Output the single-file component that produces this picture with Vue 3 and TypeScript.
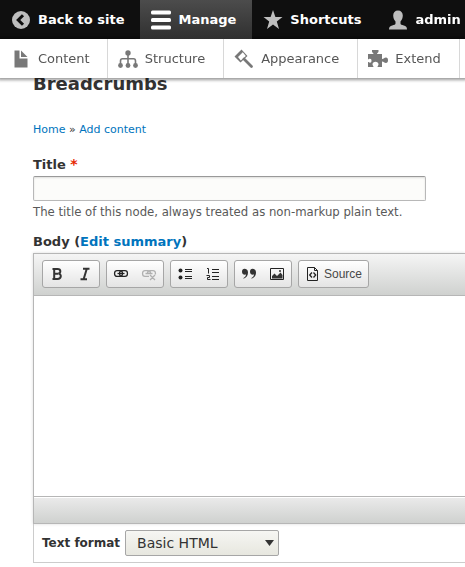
<script setup lang="ts">
import { ref } from 'vue'

const title = ref('')
const body = ref('')
const format = ref('Basic HTML')
</script>

<template>
  <header class="admin">
    <nav class="bar" aria-label="Administration">
      <a href="#" class="tab back">
        <svg width="18" height="18" viewBox="0 0 18 18"><circle cx="9" cy="9" r="9" fill="#bebebe" /><path d="M11 4.200 6.200 9l4.800 4.800" fill="none" stroke="#0f0f0f" stroke-width="3" /></svg>
        Back to site
      </a>
      <a href="#" class="tab active">
        <svg width="20" height="20" viewBox="0 0 20 20" fill="#fff"><rect y="0.500" width="20" height="4" rx="1.500" /><rect y="8" width="20" height="4" rx="1.500" /><rect y="15.500" width="20" height="4" rx="1.500" /></svg>
        Manage
      </a>
      <a href="#" class="tab">
        <svg width="20" height="20" viewBox="0 0 20 20" fill="#bebebe"><path d="M10 0l2.400 7H19.500l-5.700 4.600L16 19l-6-4.400L4 19l2.200-7.400L.5 7h7.100z" /></svg>
        Shortcuts
      </a>
      <a href="#" class="tab">
        <svg width="20" height="20" viewBox="0 0 20 20" fill="#bebebe"><path d="M10 .5c3 0 4.800 2 4.800 5 0 2.600-1 4.600-2.300 6v2c0 1 1.300 1.500 3.300 2 2 .5 3.200 1.200 3.200 4H1c0-2.800 1.200-3.500 3.200-4s3.300-1 3.300-2v-2c-1.300-1.400-2.300-3.400-2.300-6 0-3 1.800-5 4.800-5z" /></svg>
        admin
      </a>
    </nav>
    <nav class="tray" aria-label="Manage">
      <a href="#" class="item">
        <svg width="20" height="20" viewBox="0 0 20 20" fill="#787878"><path d="M3.500 1.500h5v8h8v9h-13z" /><path d="M10 1.500 16.500 8H10z" /></svg>
        Content
      </a>
      <a href="#" class="item">
        <svg width="20" height="20" viewBox="0 0 20 20" fill="#787878"><path d="M2.500 16v-4q0-2.200 2-2.200h11q2 0 2 2.200v4M10 4v12" fill="none" stroke="#787878" stroke-width="1.600" /><circle cx="10" cy="4" r="2.700" /><circle cx="2.500" cy="16.500" r="2.400" /><circle cx="10" cy="16.500" r="2.400" /><circle cx="17.500" cy="16.500" r="2.400" /></svg>
        Structure
      </a>
      <a href="#" class="item">
        <svg width="20" height="20" viewBox="0 0 20 20" fill="#787878"><path fill-rule="evenodd" d="M7.500.500 13.500 7 6.500 13.500 0.500 7.500zM8.800 3.200 4 8l2.800 3.400L11.800 7z" /><path d="M10 10l7.500 7.500" fill="none" stroke="#787878" stroke-width="2.800" stroke-linecap="round" /></svg>
        Appearance
      </a>
      <a href="#" class="item">
        <svg width="20" height="20" viewBox="0 0 20 20" fill="#787878"><path d="M0 5h5.500c0-1-1.500-1.200-1.500-2.500V1h6.500v1.500C10.500 3.800 9 4 9 5h5v5c2 0 2-1.500 4-1.500 1.300 0 2 1 2 2.800s-.7 2.700-2 2.700c-2 0-2-1.500-4-1.500V18H9.500c0-1 1-1.500 1-2.700 0-1.600-1.300-2.500-3-2.500s-3 .9-3 2.500c0 1.200 1 1.700 1 2.700H0v-5c.7 0 1 .7 2 .7s1.500-1 1.500-2S3 9.800 2 9.800s-1.300.7-2 .7z" /></svg>
        Extend
      </a>
    </nav>
  </header>

  <main class="page">
    <h2 class="heading">Breadcrumbs</h2>
    <nav class="crumbs" aria-label="Breadcrumb"><a href="#">Home</a> » <a href="#">Add content</a></nav>

    <form @submit.prevent>
      <label class="label" for="title">Title <span class="required">*</span></label>
      <input id="title" v-model="title" class="text" type="text" aria-describedby="title-help" required />
      <p id="title-help" class="help">The title of this node, always treated as non-markup plain text.</p>

      <div class="label body-label"><label for="body">Body</label> (<a href="#">Edit summary</a>)</div>
      <div class="editor">
        <div class="tools" role="toolbar" aria-label="Editor toolbar">
          <div class="group">
            <button type="button" aria-label="Bold"><svg width="16" height="16" viewBox="0 0 16 16"><path d="M3.500 3H8.500c3.800 0 3.500 4 .8 4.600C13 8 12.500 13 8.500 13H3.500M5.200 3v10M5 7.700h4" fill="none" stroke="#333" stroke-width="2" /></svg></button>
            <button type="button" aria-label="Italic"><svg width="16" height="16" viewBox="0 0 16 16"><path d="M6 2.800h6.500M3.500 13.200H10M9.700 3 6.700 13" fill="none" stroke="#333" stroke-width="2" /></svg></button>
          </div>
          <div class="group">
            <button type="button" aria-label="Link"><svg width="16" height="16" viewBox="0 0 16 16" fill="none" stroke="#222" stroke-width="1.300"><rect x="1.600" y="4.600" width="7.800" height="5.800" rx="2.400" /><rect x="6.600" y="4.600" width="7.800" height="5.800" rx="2.400" /><path d="M4.500 7.500h7" /></svg></button>
            <button type="button" aria-label="Unlink" disabled><svg width="16" height="16" viewBox="0 0 16 16" fill="none" stroke="#b0b0b0" stroke-width="1.300"><path d="M8 10.400H4A2.400 2.400 0 0 1 1.600 8V7A2.400 2.400 0 0 1 4 4.600h3a2.400 2.400 0 0 1 2.400 2.400M6.600 8V7A2.400 2.400 0 0 1 9 4.600h3a2.400 2.400 0 0 1 2.400 2.400v1.500M4.500 7.500h7M9 9l5 5M14 9l-5 5" /></svg></button>
          </div>
          <div class="group">
            <button type="button" aria-label="Bulleted list"><svg width="16" height="16" viewBox="0 0 16 16" fill="#222"><circle cx="3.500" cy="4.500" r="2" /><circle cx="3.500" cy="11.500" r="2" /><path d="M8 3h7v1H8zM8 5h7v1H8zM8 10h7v1H8zM8 12h7v1H8z" /></svg></button>
            <button type="button" aria-label="Numbered list"><svg width="16" height="16" viewBox="0 0 16 16" fill="#222"><path d="M7 3h7v1H7zM7 6h7v1H7zM7 10h7v1H7zM7 13h7v1H7z" /><path d="M2 2.500h1.500v5M1.500 9.500h3v2h-2v2h3" fill="none" stroke="#222" /></svg></button>
          </div>
          <div class="group">
            <button type="button" aria-label="Block quote"><svg width="16" height="16" viewBox="0 0 16 16" fill="#333"><path d="M3.500 2.800c2 0 3.500 1.200 3.500 3.800 0 3.200-1.800 5.400-4.500 6.200v-.8c1.500-.8 2.500-2 2.500-3.400C2.700 9.200 1 8 1 5.800c0-1.800 1-3 2.500-3z" /><path d="M11.500 2.800c2 0 3.500 1.200 3.500 3.800 0 3.200-1.800 5.400-4.500 6.200v-.8c1.500-.8 2.500-2 2.500-3.400C10.700 9.200 9 8 9 5.800c0-1.800 1-3 2.500-3z" /></svg></button>
            <button type="button" aria-label="Image"><svg width="16" height="16" viewBox="0 0 16 16"><path d="M1.500 2.500h13v11h-13z" fill="none" stroke="#222" /><path d="M3 12.500V10l2.500-2.500L8 10l3.500-3.500L13.500 9v3.500z" fill="#333" /><circle cx="11" cy="5" r="1" fill="#333" /></svg></button>
          </div>
          <div class="group">
            <button type="button"><svg width="16" height="16" viewBox="0 0 16 16" fill="none" stroke="#222"><path d="M2.500 1.500h7l3 3v10h-10z" /><path d="M9.500 1.500v3h3" /><path d="M7 6.500 4.700 9 7 11.500M8.500 6.500 10.700 9 8.500 11.500" stroke-width="1.300" /></svg>Source</button>
          </div>
        </div>
        <textarea id="body" v-model="body" class="area"></textarea>
        <div class="foot"></div>
      </div>
      <div class="format">
        <label for="format">Text format</label>
        <span class="picker">
          <select id="format" v-model="format">
            <option>Basic HTML</option>
            <option>Restricted HTML</option>
            <option>Full HTML</option>
          </select>
          <svg width="9" height="6" viewBox="0 0 9 6"><path d="M0 0h9L4.500 6z" fill="#333" /></svg>
        </span>
      </div>
    </form>
  </main>
</template>

<style>
body {
  background: #fff;
}
</style>

<style scoped>
* {
  box-sizing: border-box;
}
svg {
  display: block;
  flex: none;
}
a {
  color: #0074bd;
  text-decoration: none;
}
.admin {
  position: fixed;
  z-index: 2;
  top: 0;
  left: 0;
  right: 0;
  overflow: hidden;
  padding-bottom: 5px;
  font: 13px/39px "DejaVu Sans", sans-serif;
  white-space: nowrap;
}
.bar {
  display: flex;
  height: 39px;
  background: #0f0f0f;
}
.tab {
  display: flex;
  align-items: center;
  gap: 7px;
  padding: 0 16px 0 11px;
  color: #fff;
  font-weight: bold;
}
.back {
  gap: 8px;
  padding-left: 12px;
}
.active {
  background: linear-gradient(#4c4c4c, #303030);
}
.tray {
  display: flex;
  height: 39px;
  background: #fff;
  box-shadow: 0 0 3px 2px rgba(0, 0, 0, 0.4);
}
.item {
  display: flex;
  align-items: center;
  gap: 7px;
  padding: 0 17px 0 11px;
  border-right: 1px solid #d8d8d8;
  color: #565656;
}
.item + .item {
  padding: 0 18px 0 10px;
}
.page {
  padding: 72px 0 4px 33px;
  overflow: hidden;
  color: #333;
  font: 13px/20px "DejaVu Sans", sans-serif;
}
.heading {
  margin: 0;
  font: bold 18px/24px "DejaVu Sans", sans-serif;
}
.crumbs {
  margin: 25px 0 16px;
  font-size: 11px;
  line-height: 18px;
}
.label {
  display: block;
  font-weight: bold;
}
.required {
  color: #e62600;
  font-size: 14px;
  line-height: 16px;
}
.text {
  display: block;
  width: calc(100% - 39px);
  height: 25px;
  margin-top: 1px;
  padding: 2px 8px;
  border: 1px solid #b8b8b8;
  border-top-color: #999;
  border-radius: 2px;
  background: #fcfcfa;
  box-shadow: inset 0 1px 2px rgba(0, 0, 0, 0.12);
}
.help {
  margin: 2px 0 0;
  color: #595959;
  font: 13px/18px "DejaVu Sans Condensed", "DejaVu Sans", sans-serif;
}
.body-label {
  margin: 11px 0 1px;
}
.editor {
  border: 1px solid #b6b6b6;
  border-right: 0;
  box-shadow: 0 0 3px rgba(0, 0, 0, 0.15);
}
.tools {
  display: flex;
  gap: 6px;
  padding: 6px 8px 7px;
  border-bottom: 1px solid #b6b6b6;
  background: linear-gradient(#f5f5f5, #cfd1cf);
}
.group {
  display: flex;
  flex: none;
  border: 1px solid #a6a6a6;
  border-radius: 3px;
  background: linear-gradient(#fff, #e4e4e4);
}
button {
  display: flex;
  align-items: center;
  gap: 3px;
  height: 26px;
  padding: 0 6px;
  border: 0;
  background: none;
  color: #484848;
  font: 12px/16px "Liberation Sans", Arial, sans-serif;
}
.area {
  display: block;
  width: 100%;
  height: 200px;
  padding: 16px;
  border: 0;
  background: #fff;
  resize: none;
}
.foot {
  height: 27px;
  border-top: 1px solid #b6b6b6;
  background: linear-gradient(#ebebeb, #cfd1cf);
  box-shadow: inset 0 1px #fff;
}
.format {
  display: flex;
  align-items: center;
  gap: 5px;
  padding: 6px 8px;
  border: 1px solid #ccc;
  border-width: 0 0 1px 1px;
}
.format label {
  font: bold 12px/20px "DejaVu Sans", sans-serif;
}
.picker {
  display: grid;
  align-items: center;
}
.picker > * {
  grid-area: 1 / 1;
}
.picker svg {
  justify-self: end;
  margin-right: 5px;
  pointer-events: none;
}
select {
  appearance: none;
  width: 154px;
  height: 26px;
  padding: 0 20px 0 11px;
  border: 1px solid #a6a6a6;
  border-radius: 2px;
  background: linear-gradient(#f6f6f3, #e7e7df);
  color: #333;
  font: 14px/20px "DejaVu Sans", sans-serif;
}
</style>
